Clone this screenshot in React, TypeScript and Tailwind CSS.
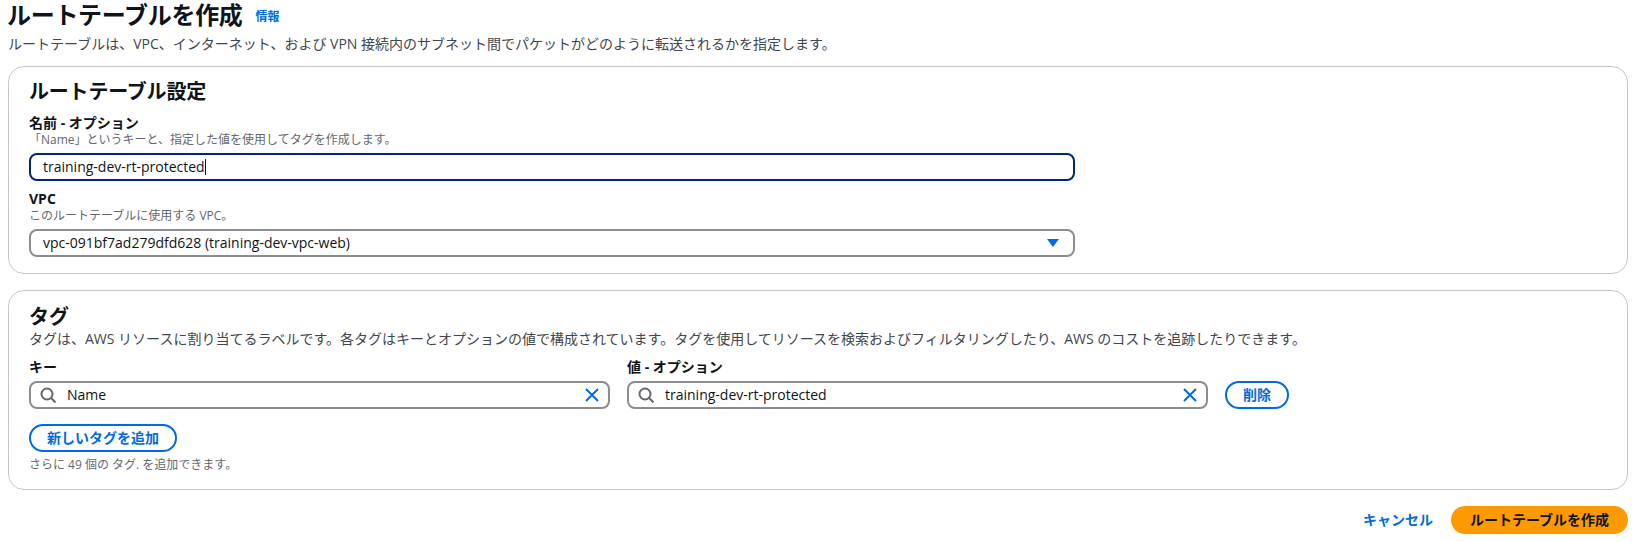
import React from 'react';

const font = "font-['Open_Sans','Noto_Sans_CJK_JP',sans-serif]";

const TagInput = ({ value }: { value: string }) => (
  <div className="flex h-[28px] items-center rounded-lg border-2 border-[#8c8c94] bg-white pl-[9px] pr-[8px]">
    <svg width="16" height="16" viewBox="0 0 16 16" fill="none" stroke="#656871" strokeWidth="2" className="shrink-0">
      <circle cx="7" cy="7" r="5.5" />
      <path d="M11 11l4.5 4.5" />
    </svg>
    <span className="ml-[11px] flex-1 text-sm leading-5 text-[#0f141a]">{value}</span>
    <svg width="16" height="16" viewBox="0 0 16 16" fill="none" stroke="#006ce0" strokeWidth="2" className="shrink-0">
      <path d="M2 2l12 12M14 2L2 14" />
    </svg>
  </div>
);

const App = () => {
  return (
    <div className={`${font} min-h-[542px] bg-white pl-2 pr-[9px] text-[#0f141a]`}>
      <div className="flex h-[30px] items-center">
        <h1 className="-ml-px text-2xl font-bold leading-[30px] tracking-[-0.3px]">ルートテーブルを作成</h1>
        <a className="ml-[13px] mt-[4px] text-xs font-bold text-[#006ce0]">情報</a>
      </div>
      <p className="mt-[4px] text-sm leading-5 text-[#424650]">
        ルートテーブルは、VPC、インターネット、および VPN 接続内のサブネット間でパケットがどのように転送されるかを指定します。
      </p>

      <section className="mt-[12px] h-[208px] rounded-2xl border border-[#c6c6cd] px-5 pt-[12px]">
        <h2 className="text-xl font-bold leading-[26px] tracking-[-0.2px]">ルートテーブル設定</h2>
        <div className="mt-[9px] text-sm font-bold leading-[18px]">名前 - オプション</div>
        <div className="text-xs leading-[16px] text-[#656871]">「Name」というキーと、指定した値を使用してタグを作成します。</div>
        <div className="mt-[5px] flex h-[28px] w-[1046px] items-center rounded-lg border-2 border-[#002a6e] pl-[12px] text-sm">
          training-dev-rt-protected
          <span className="h-[16px] w-px bg-[#0f141a]" />
        </div>
        <div className="mt-[9px] text-sm font-bold leading-[18px]">VPC</div>
        <div className="text-xs leading-[16px] text-[#656871]">このルートテーブルに使用する VPC。</div>
        <div className="mt-[5px] flex h-[28px] w-[1046px] items-center justify-between rounded-lg border-2 border-[#8c8c94] pl-[12px] pr-[14px] text-sm">
          vpc-091bf7ad279dfd628 (training-dev-vpc-web)
          <svg width="12" height="8" viewBox="0 0 12 8">
            <path d="M0 0h12L6 8z" fill="#006ce0" />
          </svg>
        </div>
      </section>

      <section className="mt-4 h-[200px] rounded-2xl border border-[#c6c6cd] px-5 pt-[13px]">
        <h2 className="text-xl font-bold leading-[26px]">タグ</h2>
        <p className="text-sm leading-[18px] text-[#424650]">
          タグは、AWS リソースに割り当てるラベルです。各タグはキーとオプションの値で構成されています。タグを使用してリソースを検索およびフィルタリングしたり、AWS のコストを追跡したりできます。
        </p>
        <div className="mt-[10px] flex items-end">
          <div className="w-[581px]">
            <div className="mb-[5px] text-sm font-bold leading-[18px]">キー</div>
            <TagInput value="Name" />
          </div>
          <div className="ml-[17px] w-[581px]">
            <div className="mb-[5px] text-sm font-bold leading-[18px]">値 - オプション</div>
            <TagInput value="training-dev-rt-protected" />
          </div>
          <button className="ml-[17px] flex h-[28px] w-[64px] items-center justify-center rounded-full border-2 border-[#006ce0] text-sm font-bold text-[#006ce0]">
            削除
          </button>
        </div>
        <button className="mt-[15px] flex h-[28px] w-[148px] items-center justify-center rounded-full border-2 border-[#006ce0] text-sm font-bold text-[#006ce0]">
          新しいタグを追加
        </button>
        <div className="mt-[5px] text-xs leading-[16px] text-[#656871]">さらに 49 個の タグ. を追加できます。</div>
      </section>

      <div className="mt-[16px] flex items-center justify-end">
        <a className="text-sm font-bold text-[#006ce0]">キャンセル</a>
        <button className="ml-[18px] flex h-[28px] w-[177px] items-center justify-center rounded-full bg-[#ff9900] text-sm font-bold text-[#0f141a]">
          ルートテーブルを作成
        </button>
      </div>
    </div>
  );
};

export default App;
